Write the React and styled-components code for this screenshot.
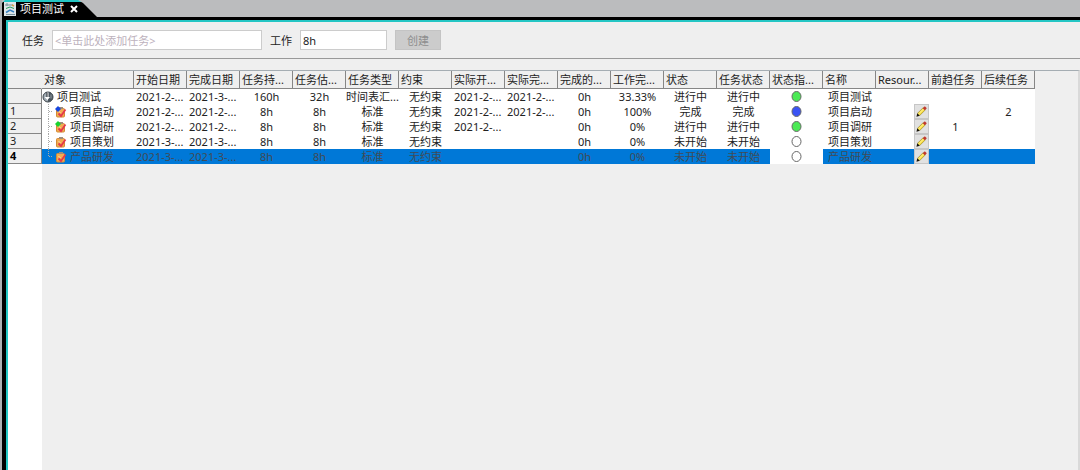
import React, { useState } from "react";
import styled, { createGlobalStyle } from "styled-components";

const columns = [
  { key: "start", title: "开始日期", align: "left" },
  { key: "finish", title: "完成日期", align: "left" },
  { key: "duration", title: "任务持..." },
  { key: "estimate", title: "任务估..." },
  { key: "type", title: "任务类型" },
  { key: "constraint", title: "约束" },
  { key: "actualStart", title: "实际开...", align: "left" },
  { key: "actualFinish", title: "实际完...", align: "left" },
  { key: "done", title: "完成的..." },
  { key: "percent", title: "工作完..." },
  { key: "state", title: "状态" },
  { key: "taskState", title: "任务状态" },
  { key: "light", title: "状态指..." },
  { key: "name", title: "名称", align: "left" },
  { key: "resource", title: "Resour...", align: "right" },
  { key: "before", title: "前趋任务" },
  { key: "after", title: "后续任务" }
];

const tasks = [
  {
    name: "项目测试",
    start: "2021-2-...",
    finish: "2021-3-...",
    duration: "160h",
    estimate: "32h",
    type: "时间表汇...",
    constraint: "无约束",
    actualStart: "2021-2-...",
    actualFinish: "2021-2-...",
    done: "0h",
    percent: "33.33%",
    state: "进行中",
    taskState: "进行中",
    light: "#4bea55"
  },
  {
    id: 1,
    name: "项目启动",
    mark: "#1646e0",
    start: "2021-2-...",
    finish: "2021-2-...",
    duration: "8h",
    estimate: "8h",
    type: "标准",
    constraint: "无约束",
    actualStart: "2021-2-...",
    actualFinish: "2021-2-...",
    done: "0h",
    percent: "100%",
    state: "完成",
    taskState: "完成",
    light: "#3a53f4",
    after: "2"
  },
  {
    id: 2,
    name: "项目调研",
    mark: "#16d430",
    start: "2021-2-...",
    finish: "2021-2-...",
    duration: "8h",
    estimate: "8h",
    type: "标准",
    constraint: "无约束",
    actualStart: "2021-2-...",
    done: "0h",
    percent: "0%",
    state: "进行中",
    taskState: "进行中",
    light: "#4bea55",
    before: "1"
  },
  {
    id: 3,
    name: "项目策划",
    start: "2021-3-...",
    finish: "2021-3-...",
    duration: "8h",
    estimate: "8h",
    type: "标准",
    constraint: "无约束",
    done: "0h",
    percent: "0%",
    state: "未开始",
    taskState: "未开始",
    light: "#ffffff"
  },
  {
    id: 4,
    name: "产品研发",
    start: "2021-3-...",
    finish: "2021-3-...",
    duration: "8h",
    estimate: "8h",
    type: "标准",
    constraint: "无约束",
    done: "0h",
    percent: "0%",
    state: "未开始",
    taskState: "未开始",
    light: "#ffffff"
  }
];

// ICONS
const TabIcon = () => (
  <svg width="12" height="14" viewBox="0 0 12 14" aria-hidden="true">
    <rect width="12" height="14" fill="#dfe6e8" />
    <path d="M1 3h8M3 1v3M2 12.5h9" stroke="#7b919b" />
    <path d="M2 6.5l4-1.5 4 1.5" stroke="#2b9d62" fill="none" />
    <path d="M2 10.5l4-2.5 4 2" stroke="#3a82c0" strokeWidth="1.5" fill="none" />
    <path d="M8 3l2 1" stroke="#d5a24a" strokeWidth="1.5" />
  </svg>
);

const ProjectIcon = () => (
  <svg width="12" height="12" viewBox="0 0 12 12" aria-hidden="true">
    <circle cx="6" cy="6" r="5" fill="#a3adb5" stroke="#3b4248" />
    <path d="M6 1a5 5 0 0 1 0 10z" fill="#4a545d" />
    <path d="M5 1.5h1.5V6H8L5.5 9 2.5 6H5z" fill="#ffffff" />
    <path d="M5 1.5V6" stroke="#20252a" />
    <path d="M9 3.5v4" stroke="#97a2aa" />
  </svg>
);

const TaskIcon = ({ mark }) => (
  <svg width="12" height="12" viewBox="0 0 12 12" aria-hidden="true">
    <rect x="1.5" y="2.5" width="8" height="8.5" rx="1" fill="#f2ac50" stroke="#d48a35" />
    <rect x="4" y="1" width="4" height="2" fill="#a08c7a" />
    <path d="M3.5 5l2 2" stroke="#f9dcb8" />
    <path d="M3.5 7.5l2.5 2.5 4.5-6.5" stroke="#e4384b" strokeWidth="1.8" fill="none" />
    {mark && <path d="M3 0l3 3-3 3-3-3z" fill={mark} />}
  </svg>
);

const Branch = ({ last }) => (
  <svg width="14" height="15" viewBox="0 0 14 15" aria-hidden="true">
    <path
      d={last ? "M6.5 0V8M7 7.5h4" : "M6.5 0V15M7 7.5h4"}
      stroke="#a8a8a8"
      strokeDasharray="1 1"
      fill="none"
    />
  </svg>
);

const PencilIcon = () => (
  <svg width="11" height="11" viewBox="0 0 11 11" aria-hidden="true">
    <path d="M2.5 8.5L8.5 2.5" stroke="#8d7a2a" strokeWidth="3.6" />
    <path d="M2.5 8.5L8 3" stroke="#f9e04a" strokeWidth="2.6" />
    <path d="M3 7.5l4.5-4.5" stroke="#fff4a8" strokeWidth="0.8" />
    <path d="M7.8 3.2l2-2" stroke="#c23a30" strokeWidth="2.8" />
    <path d="M1.2 7.2l2.6 2.6L.5 10.8z" fill="#17140c" />
  </svg>
);

const Light = ({ color }) => (
  <svg width="11" height="11" viewBox="0 0 11 11" role="img" aria-label="状态">
    <ellipse cx="5.5" cy="5.5" rx="4.5" ry="5" fill={color} stroke="#666666" />
  </svg>
);

const App = () => {
  const [form, setForm] = useState({ task: "", work: "8h" });
  const [selected, setSelected] = useState(4);

  const handleChange = e => {
    setForm({ ...form, [e.target.name]: e.target.value });
  };

  const renderCell = (task, key) => {
    if (key === "light") return <Light color={task.light} />;
    if (key === "resource") {
      return task.id ? (
        <EditButton type="button" aria-label="编辑">
          <PencilIcon />
        </EditButton>
      ) : null;
    }
    return task[key];
  };

  return (
    <Page>
      <GlobalStyle />
      <TabBar>
        <Tab>
          <TabIcon />
          <span>项目测试</span>
          <CloseButton type="button" aria-label="关闭">
            <svg width="8" height="8" viewBox="0 0 8 8">
              <path d="M1 1l6 6M7 1L1 7" stroke="#ffffff" strokeWidth="2" />
            </svg>
          </CloseButton>
        </Tab>
      </TabBar>
      <Frame>
        <Toolbar onSubmit={e => e.preventDefault()}>
          <label htmlFor="task">任务</label>
          <TaskInput
            id="task"
            name="task"
            placeholder="<单击此处添加任务>"
            value={form.task}
            onChange={handleChange}
          />
          <label htmlFor="work">工作</label>
          <WorkInput
            id="work"
            name="work"
            value={form.work}
            onChange={handleChange}
          />
          <CreateButton type="submit" disabled={!form.task}>
            创建
          </CreateButton>
        </Toolbar>
        <GridPanel>
          <Table>
            <colgroup>
              <NumberCol />
              <ObjectCol />
              {columns.map(col => (
                <DataCol key={col.key} />
              ))}
            </colgroup>
            <thead>
              <tr>
                <HeadCell $plain />
                <HeadCell>对象</HeadCell>
                {columns.map(col => (
                  <HeadCell key={col.key}>{col.title}</HeadCell>
                ))}
              </tr>
            </thead>
            <tbody>
              {tasks.map((task, i) => (
                <Row
                  key={task.name}
                  $selected={task.id && task.id === selected}
                  onClick={() => setSelected(task.id)}
                >
                  <NumberCell $bold={task.id && task.id === selected}>
                    {task.id}
                  </NumberCell>
                  <Cell $flush>
                    <TreeItem>
                      {task.id && <Branch last={i === tasks.length - 1} />}
                      {task.id ? <TaskIcon mark={task.mark} /> : <ProjectIcon />}
                      <span>{task.name}</span>
                    </TreeItem>
                  </Cell>
                  {columns.map(col => (
                    <Cell
                      key={col.key}
                      $align={col.align}
                      $indent={col.key === "name"}
                      $flush={col.key === "resource" || col.key === "type"}
                      $blank={col.key === "light"}
                    >
                      {renderCell(task, col.key)}
                    </Cell>
                  ))}
                </Row>
              ))}
            </tbody>
          </Table>
          <Gutter />
        </GridPanel>
      </Frame>
    </Page>
  );
};

const GlobalStyle = createGlobalStyle`
  * {
    box-sizing: border-box;
  }
  body {
    margin: 0;
    color: #222222;
    background: #efefef;
  }
  body, input, button {
    font-family: "Noto Sans", "Noto Sans CJK SC", sans-serif;
    font-size: 11px;
    line-height: 15px;
  }
  svg {
    display: block;
    flex: none;
  }
`;

const Page = styled.div`
  display: flex;
  flex-direction: column;
  min-height: 100vh;
  border-left: 2px solid #aeb0b2;
  background: #000000;
`;

const TabBar = styled.div`
  display: flex;
  height: 17px;
  background: #bbbcbe;
`;

const Tab = styled.div`
  display: flex;
  align-items: center;
  gap: 4px;
  padding: 0 22px 0 2px;
  color: #ffffff;
  white-space: nowrap;
  background: linear-gradient(#24c6c4 2px, #000000 2px);
  clip-path: polygon(0 3px, 3px 0, 76px 0, 81px 3px, 95px 100%, 0 100%);
`;

const CloseButton = styled.button`
  padding: 0 2px;
  border: none;
  background: none;
`;

const Frame = styled.div`
  display: flex;
  flex-direction: column;
  flex: 1;
  margin: 3px 0 0 4px;
  border: solid #24c6c4;
  border-width: 2px 0 0 2px;
  background: #efefef;
`;

const Toolbar = styled.form`
  display: flex;
  align-items: center;
  gap: 8px;
  height: 37px;
  padding-left: 14px;
  border-bottom: 1px solid #999999;
`;

const TextInput = styled.input`
  height: 20px;
  padding: 0 2px;
  border: 1px solid #cccccc;
  color: #222222;
  background: #ffffff;
  outline: none;
  &::placeholder {
    color: #bdb2bd;
    opacity: 1;
  }
`;

const TaskInput = styled(TextInput)`
  width: 210px;
`;

const WorkInput = styled(TextInput)`
  width: 87px;
`;

const CreateButton = styled.button`
  width: 46px;
  height: 20px;
  padding: 0;
  border: 1px solid #c4c4c4;
  color: #222222;
  background: #cccccc;
  &:disabled {
    color: #8e8e8e;
  }
`;

const GridPanel = styled.div`
  display: flex;
  flex-direction: column;
  flex: 1;
  margin-top: 11px;
  border-top: 1px solid #a5adb3;
  border-right: 2px solid #d9d9d9;
`;

const Table = styled.table`
  width: 1027px;
  table-layout: fixed;
  border-collapse: separate;
  border-spacing: 0;
`;

const NumberCol = styled.col`
  width: 34px;
`;

const ObjectCol = styled.col`
  width: 92px;
`;

const DataCol = styled.col`
  width: 53px;
`;

const HeadCell = styled.th`
  height: 18px;
  padding: 0 0 0 2px;
  border-right: 1px solid ${props => (props.$plain ? "#efefef" : "#868686")};
  border-bottom: 1px solid #868686;
  font-weight: 400;
  text-align: left;
  white-space: nowrap;
  overflow: hidden;
  background: #efefef;
`;

const Cell = styled.td`
  height: 15px;
  padding: 0 ${props => (props.$flush ? 0 : 2)}px;
  padding-left: ${props => props.$indent && "5px"};
  text-align: ${props => props.$align || "center"};
  white-space: nowrap;
  overflow: hidden;
  background: ${props => props.$blank && "#ffffff"};
  > svg {
    margin: 0 auto;
  }
`;

const NumberCell = styled.th`
  height: 15px;
  padding: 0 2px;
  border-right: 1px solid #868686;
  border-bottom: 1px solid #868686;
  line-height: 14px;
  font-weight: ${props => (props.$bold ? 700 : 400)};
  text-align: left;
  color: ${props => (props.$bold ? "#000000" : "#222222")};
  background: #efefef;
`;

const Row = styled.tr`
  color: ${props => (props.$selected ? "#414b56" : "#222222")};
  background: ${props => (props.$selected ? "#0078d7" : "#ffffff")};
`;

const TreeItem = styled.div`
  display: flex;
  align-items: center;
  gap: 3px;
  height: 15px;
  > svg + svg {
    margin-left: -4px;
  }
`;

const EditButton = styled.button`
  display: flex;
  align-items: center;
  justify-content: center;
  width: 15px;
  height: 15px;
  margin-left: auto;
  padding: 0;
  border: 1px solid #c6c6c6;
  background: #e1e1e1;
`;

const Gutter = styled.div`
  flex: 1;
  width: 34px;
  background: #ffffff;
`;

export default App;
